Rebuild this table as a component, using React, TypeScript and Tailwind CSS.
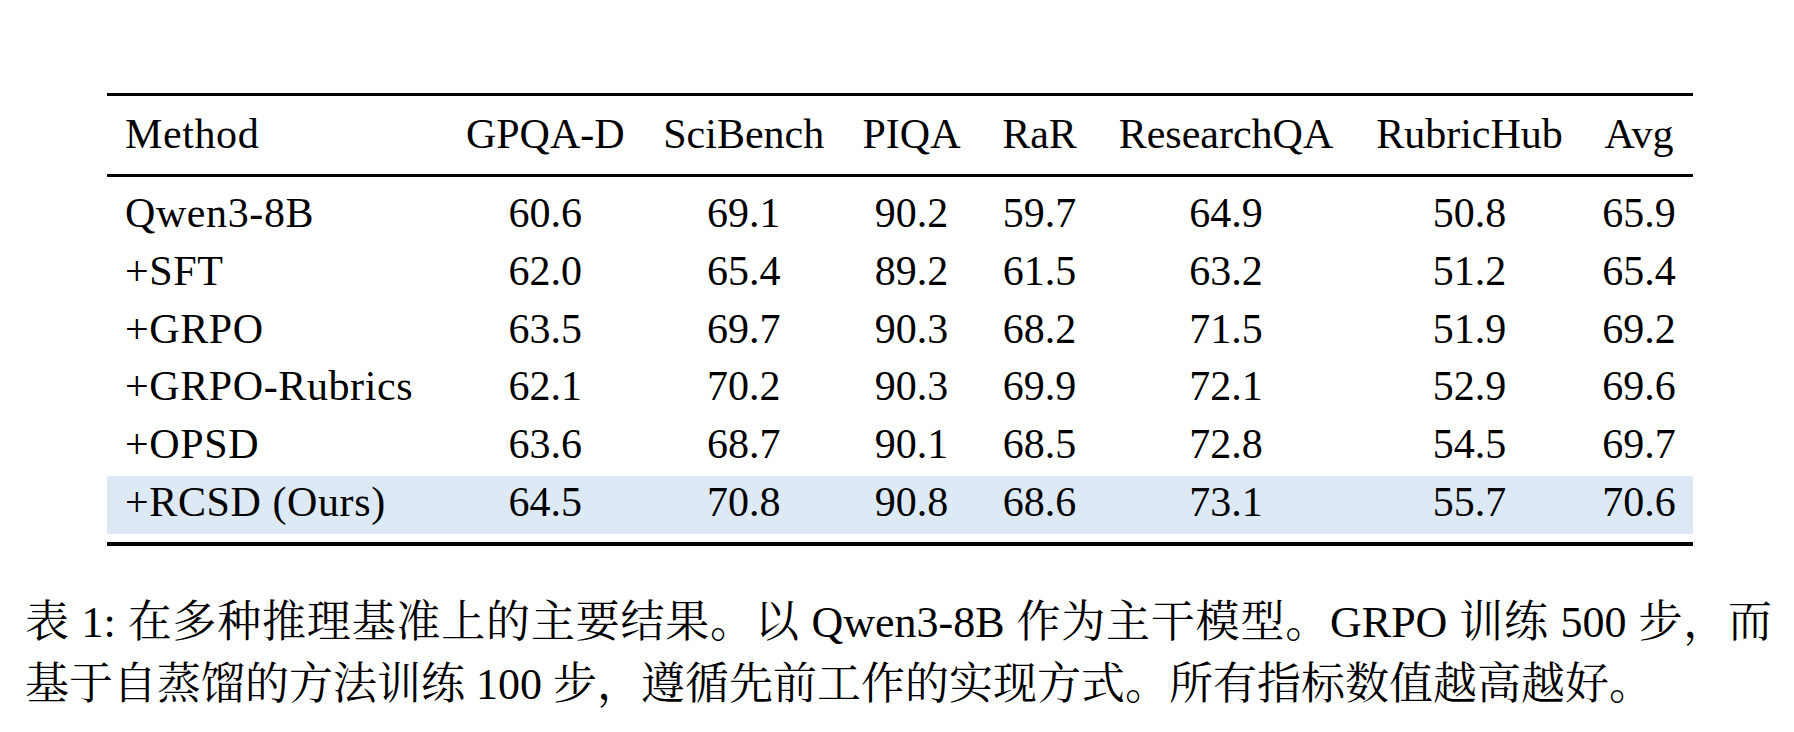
const HEADERS = ["GPQA-D", "SciBench", "PIQA", "RaR", "ResearchQA", "RubricHub", "Avg"];

const ROWS: { method: string; scores: string[]; ours?: boolean }[] = [
  { method: "Qwen3-8B", scores: ["60.6", "69.1", "90.2", "59.7", "64.9", "50.8", "65.9"] },
  { method: "+SFT", scores: ["62.0", "65.4", "89.2", "61.5", "63.2", "51.2", "65.4"] },
  { method: "+GRPO", scores: ["63.5", "69.7", "90.3", "68.2", "71.5", "51.9", "69.2"] },
  { method: "+GRPO-Rubrics", scores: ["62.1", "70.2", "90.3", "69.9", "72.1", "52.9", "69.6"] },
  { method: "+OPSD", scores: ["63.6", "68.7", "90.1", "68.5", "72.8", "54.5", "69.7"] },
  { method: "+RCSD (Ours)", scores: ["64.5", "70.8", "90.8", "68.6", "73.1", "55.7", "70.6"], ours: true },
];

function Row({ first, cells, highlight }: { first: string; cells: string[]; highlight?: boolean }) {
  return (
    <div
      className={`grid grid-cols-[338px_200.5px_196.5px_139px_117px_256px_231px_108px] h-[57.8px] leading-[53.7px] ${
        highlight ? "bg-[#dde9f5]" : ""
      }`}
    >
      <div className="pl-[18px] whitespace-nowrap tracking-[0.6px]">{first}</div>
      {cells.map((c, i) => (
        <div key={i} className="text-center whitespace-nowrap">
          {c}
        </div>
      ))}
    </div>
  );
}

// latin bits of the caption get the serif face explicitly
function L({ children }: { children: string }) {
  return <span className="font-['Liberation_Serif',serif]">{children}</span>;
}

export default function App() {
  return (
    <div className="min-h-screen w-full bg-white text-black font-['Liberation_Serif','Noto_Serif_CJK_SC','Noto_Sans_CJK_SC',serif] pt-[93px]">
      {/* table */}
      <div className="ml-[107px] w-[1586px] text-[42px]">
        <div className="h-[3px] bg-black" />
        <div className="mt-[12px]">
          <Row first="Method" cells={HEADERS} />
        </div>
        <div className="mt-[8.7px] h-[2.5px] bg-black" />
        <div className="mt-[10px]">
          {ROWS.map((r) => (
            <Row key={r.method} first={r.method} cells={r.scores} highlight={r.ours} />
          ))}
        </div>
        <div className="mt-[8.2px] h-[4px] bg-black" />
      </div>

      {/* caption */}
      <div className="mt-[46px] ml-[25px] w-[1747px] text-[44px] leading-[62px]">
        <div className="text-justify [text-align-last:justify] whitespace-nowrap">
          表<L> 1: </L>在多种推理基准上的主要结果。以<L> Qwen3-8B </L>作为主干模型。<L>GRPO </L>训练<L> 500 </L>步，而
        </div>
        <div className="whitespace-nowrap">
          基于自蒸馏的方法训练<L> 100 </L>步，遵循先前工作的实现方式。所有指标数值越高越好。
        </div>
      </div>
    </div>
  );
}
